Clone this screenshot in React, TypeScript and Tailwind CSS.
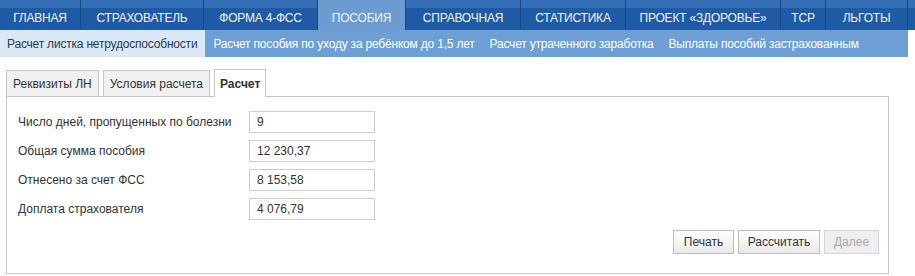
import React from 'react'

const TOP_MENU = [
    { label: 'ГЛАВНАЯ', w: 'w-[80px]' },
    { label: 'СТРАХОВАТЕЛЬ', w: 'w-[123px]' },
    { label: 'ФОРМА 4-ФСС', w: 'w-[114px]' },
    { label: 'ПОСОБИЯ', w: 'w-[88px]', active: true },
    { label: 'СПРАВОЧНАЯ', w: 'w-[115px]' },
    { label: 'СТАТИСТИКА', w: 'w-[105px]' },
    { label: 'ПРОЕКТ «ЗДОРОВЬЕ»', w: 'w-[155px]' },
    { label: 'ТСР', w: 'w-[45px]' },
    { label: 'ЛЬГОТЫ', w: 'w-[82px]' },
]

const SUB_MENU = [
    'Расчет листка нетрудоспособности',
    'Расчет пособия по уходу за ребёнком до 1,5 лет',
    'Расчет утраченного заработка',
    'Выплаты пособий застрахованным',
]

const FIELDS = [
    { label: 'Число дней, пропущенных по болезни', value: '9' },
    { label: 'Общая сумма пособия', value: '12 230,37' },
    { label: 'Отнесено за счет ФСС', value: '8 153,58' },
    { label: 'Доплата страхователя', value: '4 076,79' },
]

export default function App() {
    return (
        <div className="w-[915px] h-[276px] bg-white font-['Liberation_Sans',Arial,sans-serif] overflow-hidden">
            {/* top menu */}
            <div className="flex h-[30px] bg-gradient-to-b from-[#3570b6] from-[25%] to-[#1f5ba4] to-[28%]">
                {TOP_MENU.map((m, i) => (
                    <div
                        key={m.label}
                        className={`${m.w} shrink-0 flex items-center justify-center pt-[6px] text-[12px] tracking-[-0.2px] text-[#eef3fa] ${i > 0 ? 'border-l border-[#17488a]' : ''} ${m.active ? 'bg-[#6b9bd1]' : ''}`}
                    >
                        {m.label}
                    </div>
                ))}
                <div className="flex-1 border-l border-[#17488a]" />
            </div>

            {/* sub menu */}
            <div className="flex h-[27px] w-[908px] bg-[#6d9fd4] text-[12px] tracking-[-0.2px]">
                {SUB_MENU.map((s, i) => (
                    <div
                        key={s}
                        className={`flex items-center px-[7px] ${i === 0 ? 'bg-[#dbe8f6] text-[#243b55] pr-[8px]' : 'text-white ml-[1px]'}`}
                    >
                        {s}
                    </div>
                ))}
            </div>

            {/* tabs */}
            <div className="pl-[6px] pt-[11px]">
                <div className="flex items-end gap-[4px] h-[28px]">
                    <div className="h-[26px] px-[6px] flex items-center border border-b-0 border-[#c6c6c6] bg-[#f1f1f1] text-[12px] text-[#333]">Реквизиты ЛН</div>
                    <div className="h-[26px] px-[6px] flex items-center border border-b-0 border-[#c6c6c6] bg-[#f1f1f1] text-[12px] text-[#333]">Условия расчета</div>
                    <div className="h-[28px] px-[5px] flex items-center border border-b-0 border-[#c6c6c6] bg-white text-[12px] font-bold text-[#333] relative top-[1px]">Расчет</div>
                </div>

                {/* panel */}
                <div className="w-[883px] h-[178px] border border-[#c6c6c6] bg-white flex flex-col pl-[11px] pt-[14px] pr-[9px] pb-[19px]">
                    <div className="flex flex-col gap-[7px]">
                        {FIELDS.map((f) => (
                            <div key={f.label} className="flex items-center h-[22px]">
                                <div className="w-[231px] text-[12px] text-[#333]">{f.label}</div>
                                <div className="w-[126px] h-[22px] border border-[#cfcfcf] flex items-center px-[7px] text-[12px] text-[#333]">{f.value}</div>
                            </div>
                        ))}
                    </div>
                    <div className="flex justify-end gap-[4px] mt-auto">
                        <button className="h-[24px] w-[61px] border border-[#bdbdbd] bg-gradient-to-b from-white to-[#e9e9e9] text-[12px] text-[#333]">Печать</button>
                        <button className="h-[24px] w-[82px] border border-[#bdbdbd] bg-gradient-to-b from-white to-[#e9e9e9] text-[12px] text-[#333]">Рассчитать</button>
                        <button className="h-[24px] w-[55px] border border-[#d6d6d6] bg-[#eeeeee] text-[12px] text-[#a8a8a8]">Далее</button>
                    </div>
                </div>
            </div>
        </div>
    )
}
